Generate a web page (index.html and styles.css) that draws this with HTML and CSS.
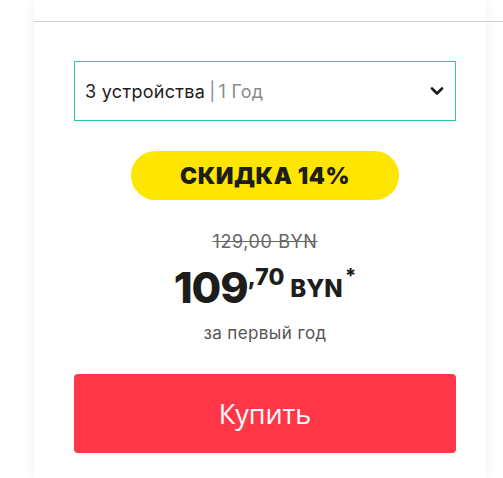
FILE: index.html
```html
<!DOCTYPE html>
<html lang="ru">
<head>
<meta charset="utf-8">
<link rel="stylesheet" href="styles.css">
</head>
<body>
<div class="card">
  <div class="top"></div>
  <div class="content">
    <div class="select">
      <span class="sel-text"><span class="dev">3 устройства</span><span class="sep">|</span><span class="year">1 Год</span></span>
      <svg class="chev" width="14" height="10" viewBox="0 0 14 10"><path d="M2 2.5 L7 7.5 L12 2.5" fill="none" stroke="#1d1d1b" stroke-width="2.6" stroke-linecap="round" stroke-linejoin="round"/></svg>
    </div>
    <div class="pill">СКИДКА 14%</div>
    <div class="old">129,00 BYN</div>
    <div class="price"><span class="int">109</span><span class="cents">,70</span><span class="cur">BYN</span><span class="star">*</span></div>
    <div class="note">за первый год</div>
    <div class="buy">Купить</div>
  </div>
</div>
</body>
</html>
```

FILE: styles.css
```css
html, body {
  margin: 0;
  padding: 0;
  background: #fff;
  overflow: hidden;
}
body {
  font-family: Inter, "Noto Sans", sans-serif;
  color: #1d1d1b;
}
.card {
  margin-left: 34px;
  width: 452px;
  height: 478px;
  background: #fff;
  box-shadow: 0 0 12px rgba(0, 0, 0, 0.07);
}
.top {
  height: 21px;
  border-bottom: 1px solid #cfcfcf;
  margin-right: -17px;
}
.content {
  padding: 39px 30px 0 40px;
}
.select {
  height: 58px;
  border: 1px solid #2ac9a8;
  display: flex;
  align-items: center;
  justify-content: space-between;
  padding: 0 11px 0 10px;
}
.sel-text {
  font-size: 18px;
  letter-spacing: 0.3px;
}
.dev { color: #1d1d1b; }
.sep { color: #7a8ea8; margin: 0 3px 0 4px; }
.year { color: #8a8a8a; }
.chev { display: block; }
.pill {
  margin: 30px auto 0;
  width: 268px;
  height: 49px;
  border-radius: 25px;
  background: #ffe600;
  display: flex;
  align-items: center;
  justify-content: center;
  font-weight: 900;
  font-size: 23px;
  letter-spacing: 0.6px;
}
.old {
  margin-top: 30px;
  text-align: center;
  font-size: 18px;
  letter-spacing: 0.6px;
  line-height: 24px;
  color: #666;
  text-decoration: line-through;
}
.price {
  margin-top: 12px;
  display: flex;
  justify-content: center;
  align-items: flex-start;
  font-weight: 800;
  line-height: 1;
}
.int {
  font-size: 43px;
  letter-spacing: -1px;
}
.cents {
  font-size: 23px;
  margin-top: 0;
}
.cur {
  font-size: 24px;
  margin: 11px 0 0 6px;
}
.star {
  font-size: 20px;
  margin-left: 2px;
}
.note {
  margin-top: 14px;
  text-align: center;
  font-size: 17px;
  letter-spacing: 0.4px;
  color: #555;
}
.buy {
  margin-top: 31px;
  height: 79px;
  border-radius: 4px;
  background: #ff3748;
  color: #fff;
  display: flex;
  align-items: center;
  justify-content: center;
  font-family: "Open Sans", sans-serif;
  font-size: 27px;
}
```
